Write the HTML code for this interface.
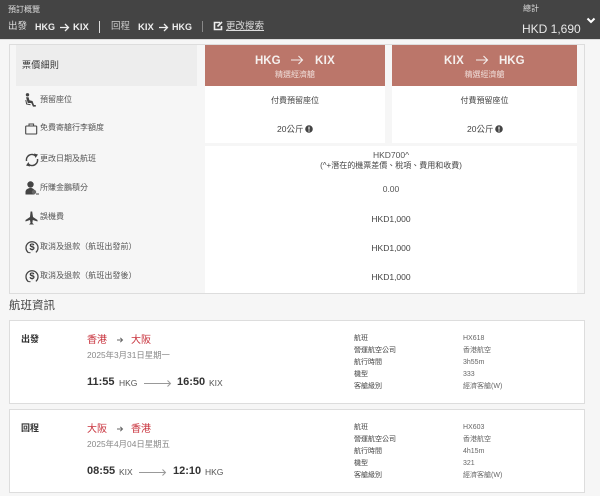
<!DOCTYPE html>
<html lang="zh-Hant"><head><meta charset="utf-8"><title>預訂概覽</title>
<style>
html,body{margin:0;padding:0}
body{width:600px;height:496px;background:#f6f6f6;position:relative;overflow:hidden;font-family:"Liberation Sans","Noto Sans CJK TC",sans-serif;color:#444}
.a{position:absolute;white-space:nowrap;line-height:1}
.box{position:absolute;box-sizing:border-box}
.c{text-align:center}
.w{color:#fff}
.s{font-size:8.5px;color:#444}
.l{font-size:8px;color:#555;left:40px}
svg{position:absolute;overflow:visible}
.root{position:absolute;left:0;top:0;width:600px;height:496px;filter:blur(.35px)}
</style></head><body><div class="root">

<div class="box" style="left:0;top:0;width:600px;height:39px;background:#444"></div>
<div class="box" style="left:0;top:39px;width:600px;height:1px;background:#ddd"></div>
<div class="a" style="left:8px;top:6px;font-size:8px;color:#ddd">預訂概覽</div>
<div class="a" style="left:8px;top:22px;font-size:9.5px;color:#ddd">出發</div>
<div class="a" style="left:35px;top:23px;font-size:9px;font-weight:bold;color:#eee">HKG</div>
<svg style="left:59px;top:23px" width="11" height="9" viewBox="0 0 11 9"><path d="M1 4.5H9.5M6 1l3.5 3.5L6 8" fill="none" stroke="#eee" stroke-width="1.3"/></svg>
<div class="a" style="left:73px;top:23px;font-size:9.5px;font-weight:bold;color:#eee">KIX</div>
<div class="box" style="left:99px;top:21px;width:1px;height:12px;background:#ddd"></div>
<div class="a" style="left:111px;top:22px;font-size:9.5px;color:#ccc">回程</div>
<div class="a" style="left:138px;top:23px;font-size:9.5px;font-weight:bold;color:#eee">KIX</div>
<svg style="left:158px;top:23px" width="11" height="9" viewBox="0 0 11 9"><path d="M1 4.5H9.5M6 1l3.5 3.5L6 8" fill="none" stroke="#eee" stroke-width="1.3"/></svg>
<div class="a" style="left:172px;top:23px;font-size:9px;font-weight:bold;color:#eee">HKG</div>
<div class="box" style="left:202px;top:21px;width:1px;height:11px;background:#888"></div>
<svg style="left:213px;top:21px" width="10" height="10" viewBox="0 0 10 10"><path d="M7 1.5H1.5V8.5H8.5V5" fill="none" stroke="#eee" stroke-width="1.6"/><path d="M4.5 5.5L9 1" stroke="#eee" stroke-width="1.6"/></svg>
<div class="a" style="left:226px;top:22px;font-size:9.5px;color:#ddd;text-decoration:underline">更改搜索</div>
<div class="a" style="left:523px;top:5px;font-size:8px;color:#ddd">總計</div>
<div class="a" style="left:522px;top:23px;font-size:12px;color:#e8e8e8">HKD 1,690</div>
<svg style="left:586px;top:17px" width="10" height="7" viewBox="0 0 10 7"><path d="M1.5 1.5L5 5L8.5 1.5" fill="none" stroke="#fff" stroke-width="2"/></svg>

<div class="box" style="left:9px;top:44px;width:576px;height:250px;border:1px solid #ddd;background:#f6f6f6"></div>
<div class="box" style="left:16px;top:45px;width:181px;height:41px;background:#ededed"></div>
<div class="a" style="left:22px;top:61px;font-size:9px;color:#333;letter-spacing:.3px">票價細則</div>
<div class="box" style="left:205px;top:45px;width:180px;height:41px;background:#bb766a"></div>
<div class="box" style="left:392px;top:45px;width:185px;height:41px;background:#bb766a"></div>
<div class="box" style="left:205px;top:86px;width:180px;height:57px;background:#fff"></div>
<div class="box" style="left:392px;top:86px;width:185px;height:57px;background:#fff"></div>
<div class="box" style="left:205px;top:146px;width:372px;height:147px;background:#fff"></div>

<div class="a" style="left:255px;top:55px;font-size:11.5px;line-height:12px;font-weight:bold;color:#f5f0ee">HKG</div>
<svg style="left:290px;top:55px" width="14" height="10" viewBox="0 0 14 10"><path d="M1 5H12.5M8.5 1l4 4-4 4" fill="none" stroke="#f5f0ee" stroke-width="1.1"/></svg>
<div class="a" style="left:315px;top:55px;font-size:11.5px;line-height:12px;font-weight:bold;color:#f5f0ee;letter-spacing:.3px">KIX</div>
<div class="a c" style="left:205px;width:180px;top:71px;font-size:8px;color:#f0dfdb">精選經濟艙</div>
<div class="a" style="left:444px;top:55px;font-size:11.5px;line-height:12px;font-weight:bold;color:#f5f0ee;letter-spacing:.3px">KIX</div>
<svg style="left:475px;top:55px" width="14" height="10" viewBox="0 0 14 10"><path d="M1 5H12.5M8.5 1l4 4-4 4" fill="none" stroke="#f5f0ee" stroke-width="1.1"/></svg>
<div class="a" style="left:499px;top:55px;font-size:11.5px;line-height:12px;font-weight:bold;color:#f5f0ee">HKG</div>
<div class="a c" style="left:392px;width:185px;top:71px;font-size:8px;color:#f0dfdb">精選經濟艙</div>

<div class="a c" style="left:205px;width:180px;top:97px;font-size:8px;color:#444">付費預留座位</div>
<div class="a c" style="left:392px;width:185px;top:97px;font-size:8px;color:#444">付費預留座位</div>
<div class="a s" style="left:277px;top:125px">20公斤</div>
<svg style="left:305px;top:125px" width="8" height="8" viewBox="0 0 8 8"><circle cx="4" cy="4" r="3.8" fill="#444"/><path d="M4 1.6V4.6M4 5.4V6.6" stroke="#fff" stroke-width="1.1"/></svg>
<div class="a s" style="left:467px;top:125px">20公斤</div>
<svg style="left:495px;top:125px" width="8" height="8" viewBox="0 0 8 8"><circle cx="4" cy="4" r="3.8" fill="#444"/><path d="M4 1.6V4.6M4 5.4V6.6" stroke="#fff" stroke-width="1.1"/></svg>

<div class="a c s" style="left:205px;width:372px;top:151px;color:#555">HKD700^</div>
<div class="a c" style="left:205px;width:372px;top:162px;font-size:8px;color:#444">(^+潛在的機票差價、稅項、費用和收費)</div>
<div class="a c s" style="left:205px;width:372px;top:185px;color:#555">0.00</div>
<div class="a c s" style="left:205px;width:372px;top:215px">HKD1,000</div>
<div class="a c s" style="left:205px;width:372px;top:244px">HKD1,000</div>
<div class="a c s" style="left:205px;width:372px;top:273px">HKD1,000</div>

<div class="a l" style="top:96px">預留座位</div>
<div class="a l" style="top:124px">免費寄艙行李額度</div>
<div class="a l" style="top:155px">更改日期及航班</div>
<div class="a l" style="top:184px">所賺金鵬積分</div>
<div class="a l" style="top:213px">誤機費</div>
<div class="a l" style="top:243px;letter-spacing:.05px">取消及退款（航班出發前）</div>
<div class="a l" style="top:272px;letter-spacing:.05px">取消及退款（航班出發後）</div>

<svg style="left:25px;top:93px" width="11" height="14" viewBox="0 0 11 14" fill="#444"><circle cx="2.5" cy="1.8" r="1.7"/><path d="M1 4.2H3.6L4.4 7.2L7.5 8L9 12H10.8V13.6H8L6.3 10H2.8Z"/><path d="M.8 7L1.6 11L5.5 11.8" fill="none" stroke="#444" stroke-width="1"/></svg>
<svg style="left:25px;top:123px" width="13" height="12" viewBox="0 0 13 12"><rect x=".7" y="3" width="11" height="8" rx=".8" fill="none" stroke="#444" stroke-width="1.1"/><path d="M4 3V1H8.6V3" fill="none" stroke="#444"/></svg>
<svg style="left:25px;top:153px" width="14" height="14" viewBox="0 0 14 14"><path d="M1.5 8A5.5 5.5 0 0 1 10.5 2.8M12.5 6A5.5 5.5 0 0 1 3.5 11.2" fill="none" stroke="#444" stroke-width="1.5"/><path d="M9 0.5L13 1.5L10.5 5Z M5 13.5L1 12.5L3.5 9Z" fill="#444"/></svg>
<svg style="left:25px;top:181px" width="14" height="14" viewBox="0 0 14 14" fill="#444"><circle cx="5.5" cy="3.5" r="3.2"/><path d="M0.5 13.5V10.5C1 8 3.5 7 5.5 7C7.5 7 9 8 9.5 9.5V13.5Z"/><circle cx="9" cy="11" r="2.2" fill="#666"/><rect x="11" y="12.5" width="3" height="1"/></svg>
<svg style="left:25px;top:211px" width="13" height="14" viewBox="0 0 13 14" fill="#444"><path d="M5.6 0.5L7.2 0.5L8 6L12.5 9V10.5L7.8 9L7.4 12L9 13.5H4L5.5 12L5 9L0.5 10.5V9L5 6Z"/></svg>
<svg style="left:25px;top:240px" width="14" height="14" viewBox="0 0 14 14"><path d="M3 12.2A6 6 0 1 1 11 12.2" fill="none" stroke="#444" stroke-width="1.3"/><path d="M1.5 10.5L3 12.5L5.5 12.8M12.5 10.5L11 12.5" fill="none" stroke="#444" stroke-width="1"/><text x="7" y="10.2" font-size="9.5" font-weight="bold" fill="#333" text-anchor="middle" font-family="Liberation Sans">$</text></svg>
<svg style="left:25px;top:269px" width="14" height="14" viewBox="0 0 14 14"><path d="M3 12.2A6 6 0 1 1 11 12.2" fill="none" stroke="#444" stroke-width="1.3"/><path d="M1.5 10.5L3 12.5L5.5 12.8M12.5 10.5L11 12.5" fill="none" stroke="#444" stroke-width="1"/><text x="7" y="10.2" font-size="9.5" font-weight="bold" fill="#333" text-anchor="middle" font-family="Liberation Sans">$</text></svg>

<div class="a" style="left:9px;top:301px;font-size:11.5px;color:#444">航班資訊</div>

<div class="box" style="left:9px;top:320px;width:576px;height:84px;background:#fff;border:1px solid #ddd"></div>
<div class="box" style="left:9px;top:409px;width:576px;height:84px;background:#fff;border:1px solid #ddd"></div>

<div class="a" style="left:21px;top:335px;font-size:9px;color:#333;font-weight:bold">出發</div>
<div class="a" style="left:87px;top:336px;font-size:10px;color:#c8323c">香港</div>
<svg style="left:116px;top:336px" width="8" height="8" viewBox="0 0 8 8"><path d="M1 4H6.5M4.3 1.8L6.5 4L4.3 6.2" fill="none" stroke="#666" stroke-width="1"/></svg>
<div class="a" style="left:131px;top:336px;font-size:10px;color:#c8323c">大阪</div>
<div class="a" style="left:87px;top:351px;font-size:8.4px;color:#888">2025年3月31日星期一</div>
<div class="a" style="left:87px;top:377px;font-size:11px;font-weight:bold;color:#333">11:55</div>
<div class="a" style="left:119px;top:379px;font-size:8.5px;color:#555">HKG</div>
<svg style="left:143px;top:379px" width="29" height="9" viewBox="0 0 29 9"><path d="M1 4.5H27.5M24.5 1.5L27.5 4.5L24.5 7.5" fill="none" stroke="#999" stroke-width="1"/></svg>
<div class="a" style="left:177px;top:377px;font-size:11px;font-weight:bold;color:#333">16:50</div>
<div class="a" style="left:209px;top:379px;font-size:8.5px;color:#555">KIX</div>

<div class="a" style="left:21px;top:424px;font-size:9px;color:#333;font-weight:bold">回程</div>
<div class="a" style="left:87px;top:425px;font-size:10px;color:#c8323c">大阪</div>
<svg style="left:116px;top:425px" width="8" height="8" viewBox="0 0 8 8"><path d="M1 4H6.5M4.3 1.8L6.5 4L4.3 6.2" fill="none" stroke="#666" stroke-width="1"/></svg>
<div class="a" style="left:131px;top:425px;font-size:10px;color:#c8323c">香港</div>
<div class="a" style="left:87px;top:440px;font-size:8.4px;color:#888">2025年4月04日星期五</div>
<div class="a" style="left:87px;top:466px;font-size:11px;font-weight:bold;color:#333">08:55</div>
<div class="a" style="left:119px;top:468px;font-size:8.5px;color:#555">KIX</div>
<svg style="left:138px;top:468px" width="29" height="9" viewBox="0 0 29 9"><path d="M1 4.5H27.5M24.5 1.5L27.5 4.5L24.5 7.5" fill="none" stroke="#999" stroke-width="1"/></svg>
<div class="a" style="left:173px;top:466px;font-size:11px;font-weight:bold;color:#333">12:10</div>
<div class="a" style="left:205px;top:468px;font-size:8.5px;color:#555">HKG</div>

<div class="a" style="left:354px;top:333px;font-size:7px;line-height:12px;color:#444;white-space:pre">航班
營運航空公司
航行時間
機型
客艙級別</div>
<div class="a" style="left:463px;top:333px;font-size:7px;line-height:12px;color:#666;white-space:pre">HX618
香港航空
3h55m
333
經濟客艙(W)</div>
<div class="a" style="left:354px;top:422px;font-size:7px;line-height:12px;color:#444;white-space:pre">航班
營運航空公司
航行時間
機型
客艙級別</div>
<div class="a" style="left:463px;top:422px;font-size:7px;line-height:12px;color:#666;white-space:pre">HX603
香港航空
4h15m
321
經濟客艙(W)</div>

</div></body></html>
